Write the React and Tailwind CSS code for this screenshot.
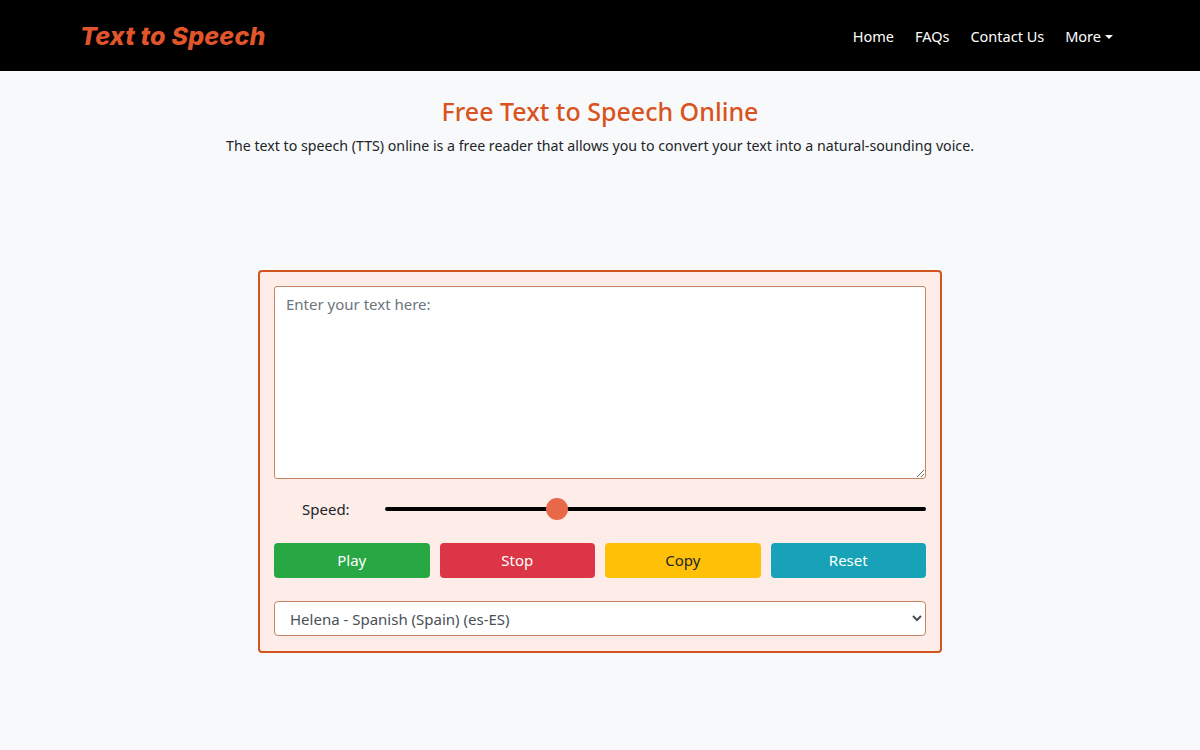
import React, { useState } from 'react';

const NAV_LINKS = ['Home', 'FAQs', 'Contact Us'];

const BUTTONS = [
  { label: 'Play', cls: 'bg-[#28a745] text-white' },
  { label: 'Stop', cls: 'bg-[#dc3545] text-white' },
  { label: 'Copy', cls: 'bg-[#ffc107] text-[#212529]' },
  { label: 'Reset', cls: 'bg-[#17a2b8] text-white' },
];

export default function App() {
  const [text, setText] = useState('');
  const [speed, setSpeed] = useState(1);

  return (
    <div className="min-h-[750px] bg-[#f8f9fa] font-['Noto_Sans',sans-serif] text-[#212529]">
      <header className="bg-black h-[71px]">
        <div className="max-w-[1040px] mx-auto h-full flex items-center justify-between pt-[2px]">
          <span className="font-['Inter',sans-serif] italic font-extrabold text-[25px] tracking-[0.2px] text-[#e0552b]">
            Text to Speech
          </span>
          <nav className="flex items-center gap-[21px] text-[14.5px] text-white pr-[7px]">
            {NAV_LINKS.map((item) => (
              <a key={`nav-${item}`} className="cursor-pointer">
                {item}
              </a>
            ))}
            <a className="cursor-pointer flex items-center gap-[4px]">
              More
              <span className="inline-block w-0 h-0 border-x-[4px] border-x-transparent border-t-[4px] border-t-white mt-[1px]" />
            </a>
          </nav>
        </div>
      </header>

      <main className="flex flex-col items-center">
        <h1 className="mt-[24px] text-[25px] leading-[32px] font-medium text-[#d9531e]">
          Free Text to Speech Online
        </h1>
        <p className="mt-[8px] text-[14.2px] leading-[22px]">
          The text to speech (TTS) online is a free reader that allows you to convert your text into a natural-sounding voice.
        </p>

        <div className="mt-[113px] w-[684px] border-2 border-[#d2541e] rounded-[4px] bg-[#fdece8] px-[14px] pt-[14px] pb-[15px] flex flex-col">
          <textarea
            value={text}
            onChange={(e) => setText(e.target.value)}
            placeholder="Enter your text here:"
            className="h-[193px] w-full bg-white border border-[#c58462] rounded-[3px] px-[11px] py-[6px] text-[15px] placeholder:text-[#6c757d] outline-none"
          />

          <div className="flex items-center h-[60px] mb-[4px]">
            <label className="w-[111px] pl-[28px] text-[15px]">Speed:</label>
            <input
              type="range"
              min="0.1"
              max="3"
              step="0.1"
              value={speed}
              onChange={(e) => setSpeed(e.target.value)}
              className="flex-1 h-[4px] bg-black rounded-full appearance-none outline-none [&::-webkit-slider-thumb]:appearance-none [&::-webkit-slider-thumb]:w-[22px] [&::-webkit-slider-thumb]:h-[22px] [&::-webkit-slider-thumb]:rounded-full [&::-webkit-slider-thumb]:bg-[#e8684a] [&::-webkit-slider-thumb]:cursor-pointer"
            />
          </div>

          <div className="grid grid-cols-4 gap-[10px]">
            {BUTTONS.map((b) => (
              <button
                key={`btn-${b.label}`}
                className={`h-[35px] rounded-[4px] text-[15px] ${b.cls}`}
              >
                {b.label}
              </button>
            ))}
          </div>

          <select className="mt-[23px] h-[35px] w-full bg-white border border-[#c58462] rounded-[4px] pl-[11px] pr-[8px] text-[15px] text-[#495057] outline-none">
            <option>Helena - Spanish (Spain) (es-ES)</option>
            <option>Laura - Spanish (Spain) (es-ES)</option>
            <option>Pablo - Spanish (Spain) (es-ES)</option>
          </select>
        </div>
      </main>
    </div>
  );
}
